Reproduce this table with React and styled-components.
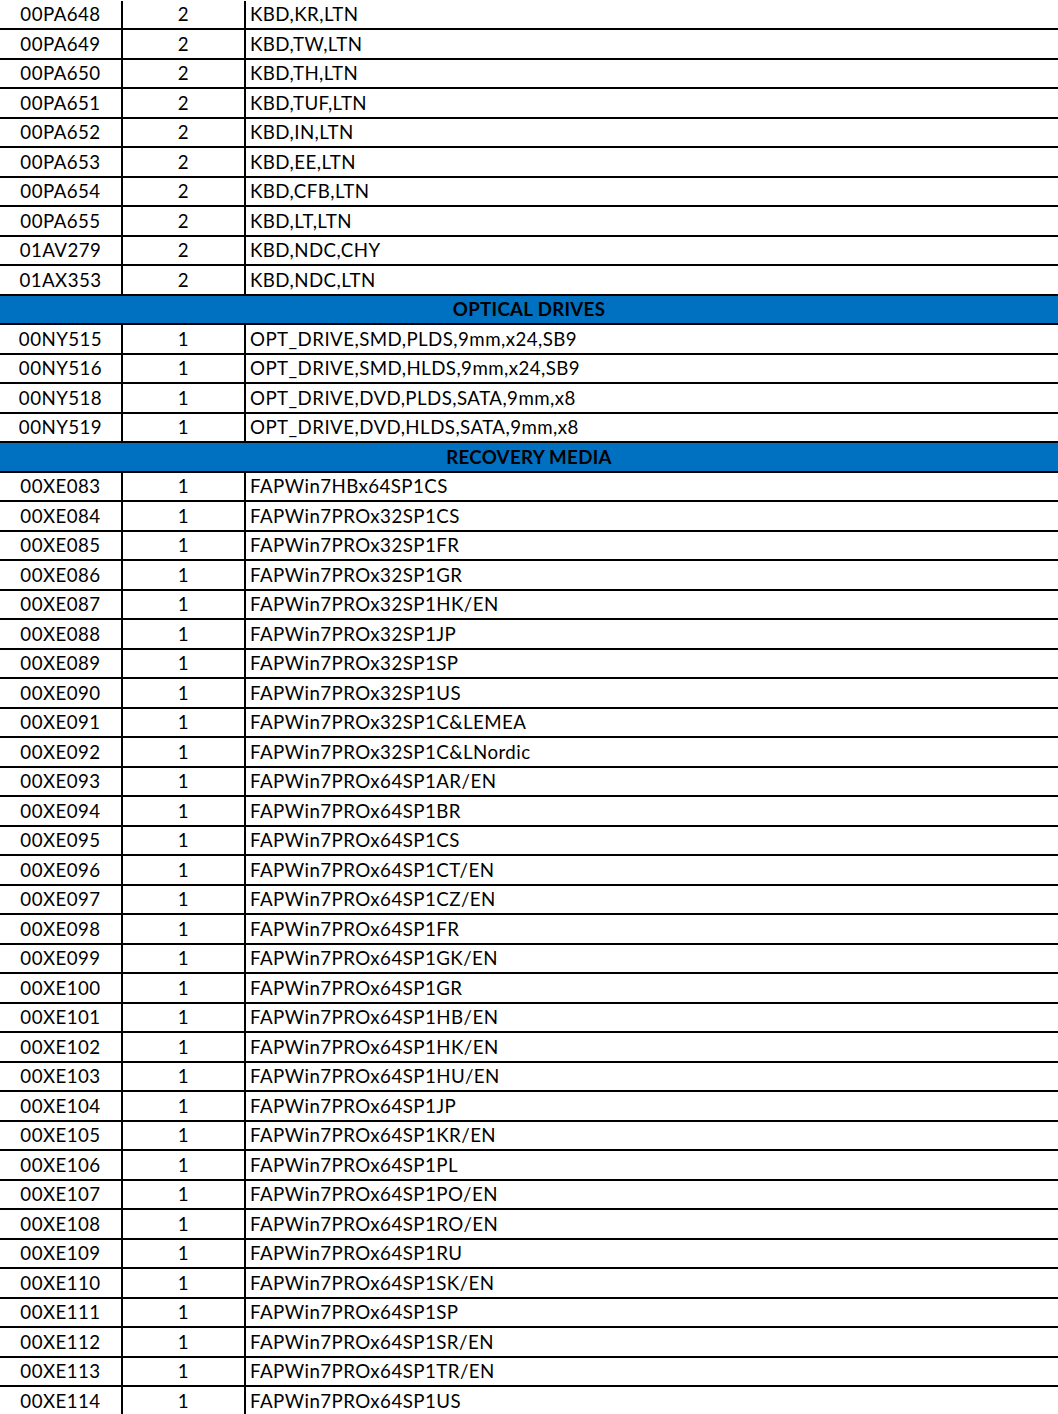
import React from "react";
import styled, { createGlobalStyle } from "styled-components";

const keyboards = [
    ["00PA648", "KBD,KR,LTN"],
    ["00PA649", "KBD,TW,LTN"],
    ["00PA650", "KBD,TH,LTN"],
    ["00PA651", "KBD,TUF,LTN"],
    ["00PA652", "KBD,IN,LTN"],
    ["00PA653", "KBD,EE,LTN"],
    ["00PA654", "KBD,CFB,LTN"],
    ["00PA655", "KBD,LT,LTN"],
    ["01AV279", "KBD,NDC,CHY"],
    ["01AX353", "KBD,NDC,LTN"],
];

const drives = [
    ["00NY515", "OPT_DRIVE,SMD,PLDS,9mm,x24,SB9"],
    ["00NY516", "OPT_DRIVE,SMD,HLDS,9mm,x24,SB9"],
    ["00NY518", "OPT_DRIVE,DVD,PLDS,SATA,9mm,x8"],
    ["00NY519", "OPT_DRIVE,DVD,HLDS,SATA,9mm,x8"],
];

const media = [
    ["00XE083", "FAPWin7HBx64SP1CS"],
    ["00XE084", "FAPWin7PROx32SP1CS"],
    ["00XE085", "FAPWin7PROx32SP1FR"],
    ["00XE086", "FAPWin7PROx32SP1GR"],
    ["00XE087", "FAPWin7PROx32SP1HK/EN"],
    ["00XE088", "FAPWin7PROx32SP1JP"],
    ["00XE089", "FAPWin7PROx32SP1SP"],
    ["00XE090", "FAPWin7PROx32SP1US"],
    ["00XE091", "FAPWin7PROx32SP1C&LEMEA"],
    ["00XE092", "FAPWin7PROx32SP1C&LNordic"],
    ["00XE093", "FAPWin7PROx64SP1AR/EN"],
    ["00XE094", "FAPWin7PROx64SP1BR"],
    ["00XE095", "FAPWin7PROx64SP1CS"],
    ["00XE096", "FAPWin7PROx64SP1CT/EN"],
    ["00XE097", "FAPWin7PROx64SP1CZ/EN"],
    ["00XE098", "FAPWin7PROx64SP1FR"],
    ["00XE099", "FAPWin7PROx64SP1GK/EN"],
    ["00XE100", "FAPWin7PROx64SP1GR"],
    ["00XE101", "FAPWin7PROx64SP1HB/EN"],
    ["00XE102", "FAPWin7PROx64SP1HK/EN"],
    ["00XE103", "FAPWin7PROx64SP1HU/EN"],
    ["00XE104", "FAPWin7PROx64SP1JP"],
    ["00XE105", "FAPWin7PROx64SP1KR/EN"],
    ["00XE106", "FAPWin7PROx64SP1PL"],
    ["00XE107", "FAPWin7PROx64SP1PO/EN"],
    ["00XE108", "FAPWin7PROx64SP1RO/EN"],
    ["00XE109", "FAPWin7PROx64SP1RU"],
    ["00XE110", "FAPWin7PROx64SP1SK/EN"],
    ["00XE111", "FAPWin7PROx64SP1SP"],
    ["00XE112", "FAPWin7PROx64SP1SR/EN"],
    ["00XE113", "FAPWin7PROx64SP1TR/EN"],
    ["00XE114", "FAPWin7PROx64SP1US"],
];

function PartRows({ rows, qty }) {
    return rows.map(([part, desc]) => (
        <Row key={part}>
            <Cell $center>{part}</Cell>
            <Cell $center>{qty}</Cell>
            <Desc>{desc}</Desc>
        </Row>
    ));
}

function App() {
    return (
        <>
            <GlobalStyle />
            <Sheet>
                <PartRows rows={keyboards} qty={2} />
                <SectionRow>OPTICAL DRIVES</SectionRow>
                <PartRows rows={drives} qty={1} />
                <SectionRow>RECOVERY MEDIA</SectionRow>
                <PartRows rows={media} qty={1} />
            </Sheet>
        </>
    );
}

const GlobalStyle = createGlobalStyle`
    body {
        margin: 0;
        background: #fff;
        color: #000;
        font-family: Lato, "Open Sans", sans-serif;
    }
`;

const Sheet = styled.div`
    display: flex;
    flex-direction: column;
    padding-top: 0.5px;
    height: 1414px;
    overflow: hidden;
`;

const Row = styled.div`
    display: flex;
    flex-shrink: 0;
    height: 29.5px;
    box-sizing: border-box;
    border-bottom: 2px solid #000;
    font-size: 18.7px;
    letter-spacing: 0.45px;
`;

const Cell = styled.div`
    width: 123px;
    flex-shrink: 0;
    box-sizing: border-box;
    border-right: 2px solid #000;
    display: flex;
    align-items: center;
    justify-content: ${(p) => (p.$center ? "center" : "flex-start")};
`;

const Desc = styled.div`
    flex: 1;
    display: flex;
    align-items: center;
    padding-left: 4px;
    white-space: nowrap;
`;

const SectionRow = styled(Row)`
    background: #0070c0;
    justify-content: center;
    align-items: center;
    font-weight: 700;
    letter-spacing: 0.3px;
`;

export default App;
